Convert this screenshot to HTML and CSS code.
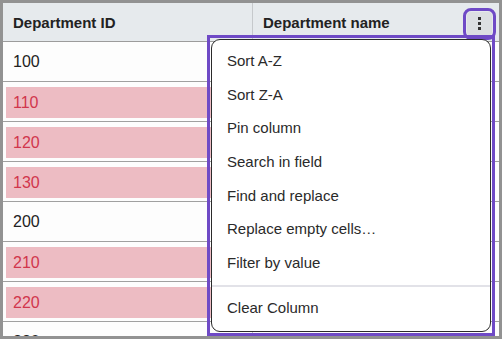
FILE: index.html
```html
<!DOCTYPE html>
<html lang="en">
<head>
  <meta charset="UTF-8">
  <title>Departments</title>
  <link rel="stylesheet" href="styles.css">
</head>
<body>
  <div class="frame">
    <div class="grid">
      <div class="head">Department ID</div>
      <div class="head head-last">
        <span>Department name</span>
        <button class="kebab" aria-label="Column menu"><i></i><i></i><i></i></button>
      </div>

      <!-- 이름 칸은 메뉴에 가려짐 -->
      <div class="cell">100</div><div class="cell cell-last"></div>
      <div class="cell"><span class="mark">110</span></div><div class="cell cell-last"></div>
      <div class="cell"><span class="mark">120</span></div><div class="cell cell-last"></div>
      <div class="cell"><span class="mark">130</span></div><div class="cell cell-last"></div>
      <div class="cell">200</div><div class="cell cell-last"></div>
      <div class="cell"><span class="mark">210</span></div><div class="cell cell-last"></div>
      <div class="cell"><span class="mark">220</span></div><div class="cell cell-last"></div>
      <div class="cell">230</div><div class="cell cell-last"></div>
    </div>

    <div class="menuWrap">
      <ul class="menu">
        <li>Sort A-Z</li>
        <li>Sort Z-A</li>
        <li>Pin column</li>
        <li>Search in field</li>
        <li>Find and replace</li>
        <li>Replace empty cells…</li>
        <li>Filter by value</li>
        <li class="sep"></li>
        <li>Clear Column</li>
      </ul>
    </div>
  </div>
</body>
</html>
```

FILE: styles.css
```css
* {
  box-sizing: border-box;
}

body {
  margin: 0;
  font-family: "Liberation Sans", Arial, sans-serif;
  color: #222;
  background-color: #fff;
}

.frame {
  position: relative;
  width: 502px;
  height: 339px;
  border: 3px solid #929292;
  overflow: hidden;
  background-color: #fdfdfd;
}

.grid {
  display: grid;
  grid-template-columns: 250px 1fr;
}

.head {
  display: flex;
  align-items: center;
  height: 39px;
  padding-left: 10px;
  font-size: 15px;
  font-weight: bold;
  background-color: #e6eaed;
  border-bottom: 1px solid #9c9c9c;
  border-right: 1px solid #c6c9cc;
}

.head-last {
  justify-content: space-between;
  padding-right: 7px;
  border-right: none;
}

.kebab {
  display: flex;
  flex-direction: column;
  align-items: center;
  justify-content: center;
  gap: 2.5px;
  width: 25px;
  height: 24px;
  margin-top: 3px;
  padding: 0;
  border: none;
  border-radius: 4px;
  background-color: #dcdfe2;
  outline: 3px solid #6f4ac6;
  outline-offset: 1px;
}

/* 점 세개 */
.kebab i {
  display: block;
  width: 2.5px;
  height: 2.5px;
  background-color: #333;
}

.cell {
  display: flex;
  align-items: center;
  height: 40px;
  padding-left: 10px;
  font-size: 16px;
  border-bottom: 1px solid #a0a0a0;
  border-right: 1px solid #c6c9cc;
}

.cell-last {
  border-right: none;
}

.cell:has(.mark) {
  padding: 5px 3px 3px 3px;
}

.mark {
  display: flex;
  align-items: center;
  width: 100%;
  height: 100%;
  padding-left: 7px;
  color: #d1364c;
  background-color: #edbcc3;
}

.menuWrap {
  position: absolute;
  left: 204px;
  top: 32px;
  width: 288px;
  height: 301px;
  padding: 1px;
  border: 3px solid #6f4ac6;
}

.menu {
  list-style: none;
  margin: 0;
  height: 100%;
  padding: 4px 0 0;
  border: 1px solid #2b2b2b;
  border-radius: 9px;
  background-color: #fff;
}

.menu li {
  display: flex;
  align-items: center;
  height: 33.6px;
  padding-left: 15px;
  font-size: 15px;
  color: #2a2a2a;
}

.menu li.sep {
  height: 2px;
  margin: 6px 0 3.5px;
  background-color: #e2e2e8;
}
```
